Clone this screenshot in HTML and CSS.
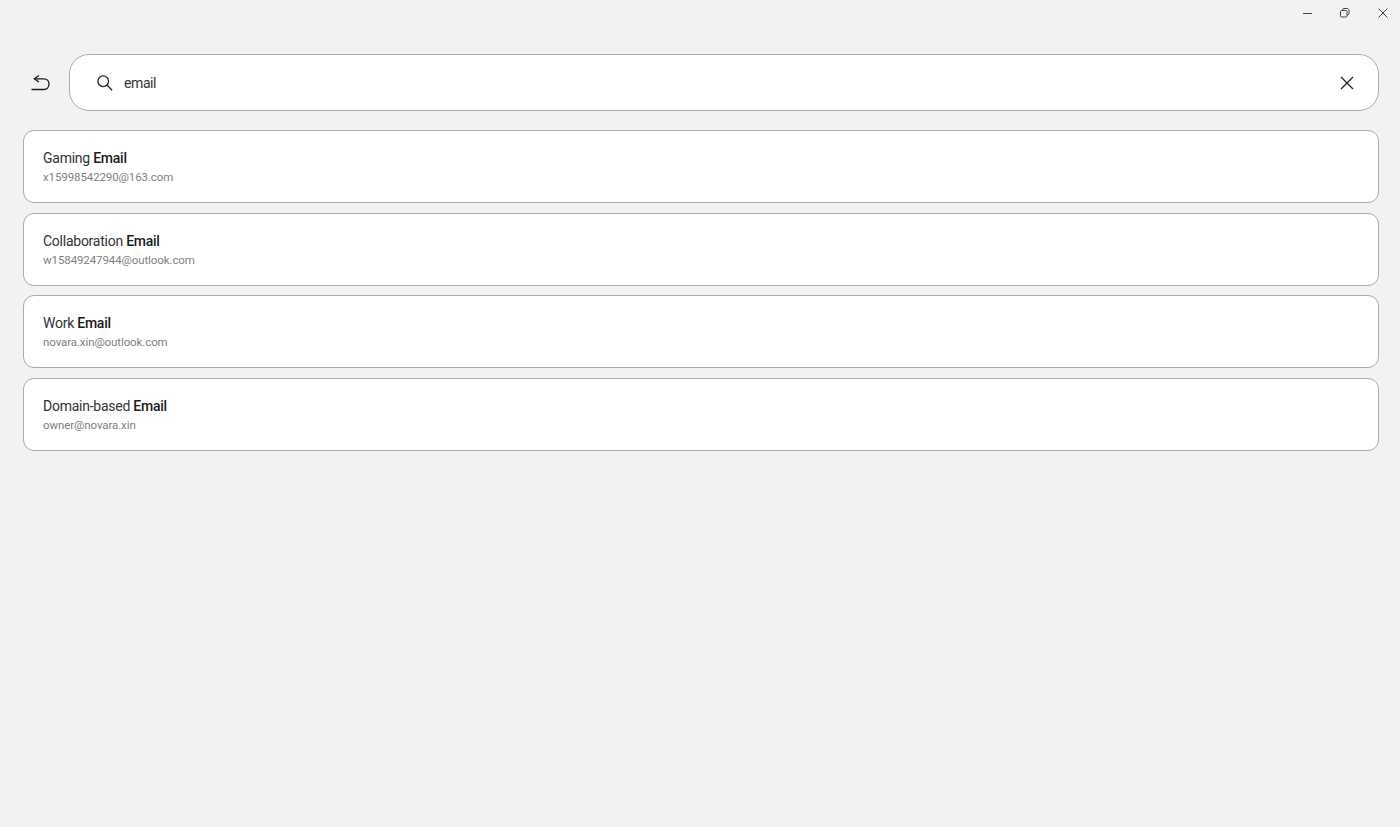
FILE: index.html
```html
<!DOCTYPE html>
<html lang="en">

<head>
    <meta charset="UTF-8">
    <meta name="viewport" content="width=device-width, initial-scale=1.0">
    <title>Search</title>
    <link rel="stylesheet" href="styles.css">
</head>

<body>
    <div class="titlebar">
        <svg class="win-icon" viewBox="0 0 38 26">
            <path d="M17 13.500h9" />
        </svg>
        <svg class="win-icon" viewBox="0 0 38 26">
            <rect x="16.500" y="10.500" width="6.500" height="6.500" rx="1.200" />
            <path d="M18.500 10.500v-.6c0-.8.6-1.400 1.400-1.400h3.200c1 0 1.900.9 1.900 1.900v3.200c0 .8-.6 1.400-1.400 1.400h-.6" />
        </svg>
        <svg class="win-icon" viewBox="0 0 38 26">
            <path d="M16.500 8.500l9 9M25.500 8.500l-9 9" />
        </svg>
    </div>

    <div class="search-row">
        <button class="back-button" aria-label="Back">
            <svg viewBox="0 0 20 20" width="20" height="20">
                <path d="M9 2.500L4.300 5.800 9 9" />
                <path d="M4.300 5.800h9.700c2.800 0 5 2.200 5 5.300s-2.200 5.400-5 5.400H1.500" />
            </svg>
        </button>
        <div class="search-box">
            <svg class="search-icon" viewBox="0 0 18 18" width="16" height="16">
                <circle cx="7" cy="7" r="6" />
                <path d="M11.300 11.300l5.700 5.900" />
            </svg>
            <span class="search-text">email</span>
            <svg class="clear-icon" viewBox="0 0 14 14" width="14" height="14">
                <path d="M1 1l12 12M13 1L1 13" />
            </svg>
        </div>
    </div>

    <div class="results">
        <div class="result-card">
            <div class="result-title">Gaming <b>Email</b></div>
            <div class="result-sub">x15998542290@163.com</div>
        </div>
        <div class="result-card">
            <div class="result-title">Collaboration <b>Email</b></div>
            <div class="result-sub">w15849247944@outlook.com</div>
        </div>
        <div class="result-card">
            <div class="result-title">Work <b>Email</b></div>
            <div class="result-sub">novara.xin@outlook.com</div>
        </div>
        <div class="result-card">
            <div class="result-title">Domain-based <b>Email</b></div>
            <div class="result-sub">owner@novara.xin</div>
        </div>
    </div>
</body>

</html>
```

FILE: styles.css
```css
html,
body {
    height: 100%;
}

body {
    margin: 0;
    background-color: #f2f2f2;
    font-family: Roboto, "Open Sans", sans-serif;
    color: #1a1a1a;
    overflow: hidden;
}

.titlebar {
    display: flex;
    justify-content: flex-end;
    height: 26px;
}

.win-icon {
    width: 38px;
    height: 26px;
    fill: none;
    stroke: #444;
    stroke-width: 1;
}

.search-row {
    display: flex;
    align-items: center;
    margin: 28px 21px 0 23px;
}

.back-button {
    display: flex;
    align-items: center;
    justify-content: center;
    width: 46px;
    height: 57px;
    padding: 0 13px 0 0;
    border: none;
    background: none;
}

.back-button svg {
    flex: none;
    fill: none;
    stroke: #1a1a1a;
    stroke-width: 1.300;
}

.search-box {
    flex: 1;
    display: flex;
    align-items: center;
    box-sizing: border-box;
    height: 57px;
    padding: 0 24px 0 27px;
    background-color: #fff;
    border: 1px solid #ababab;
    border-radius: 20px;
}

.search-icon {
    fill: none;
    stroke: #222;
    stroke-width: 1.400;
}

.search-text {
    flex: 1;
    margin-left: 11px;
    font-size: 14px;
    letter-spacing: -0.400px;
    color: #333;
}

.clear-icon {
    margin-top: 1px;
    fill: none;
    stroke: #222;
    stroke-width: 1.300;
}

.results {
    display: flex;
    flex-direction: column;
    gap: 9.750px;
    margin: 19.250px 21px 0 23px;
}

.result-card {
    display: flex;
    flex-direction: column;
    justify-content: center;
    box-sizing: border-box;
    height: 72.750px;
    padding: 2px 19px 0;
    background-color: #fff;
    border: 1px solid #ababab;
    border-radius: 11px;
}

.result-title {
    font-size: 14px;
    line-height: 20px;
    letter-spacing: -0.250px;
    color: #333;
}

.result-title b {
    font-weight: 500;
    color: #1a1a1a;
}

.result-sub {
    font-size: 11.500px;
    line-height: 19px;
    letter-spacing: -0.100px;
    color: #808080;
}
```
